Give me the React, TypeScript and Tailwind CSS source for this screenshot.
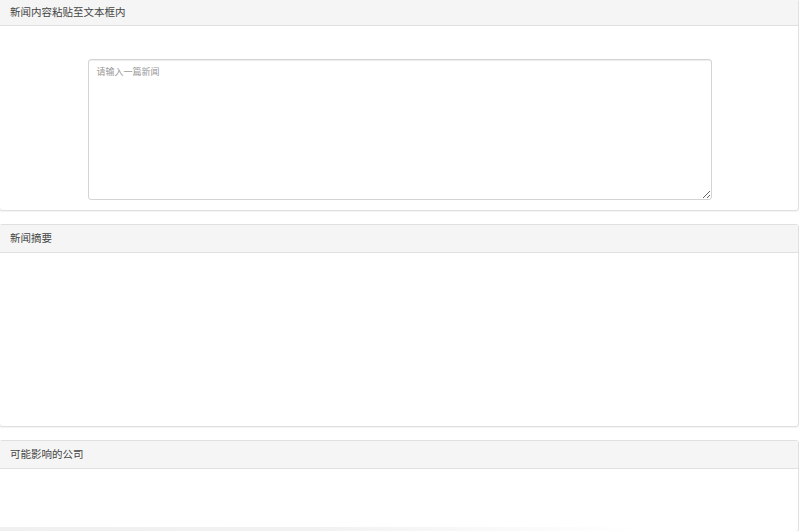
export default function App() {
  const font = { fontFamily: '"Liberation Sans", "Noto Sans CJK SC", sans-serif' };
  return (
    <div className="w-[800px] h-[531px] overflow-hidden bg-white" style={font}>
      <div className="-mt-px pr-[1px]">
        {/* 新闻内容 */}
        <section className="border border-[#e0e0e0] rounded-[3px] bg-white shadow-[0_1px_1px_rgba(0,0,0,0.05)] -ml-px">
          <div className="h-[26px] bg-[#f5f5f5] border-b border-[#e0e0e0] pl-[10px] flex items-center text-[10.5px] text-[#444]">
            新闻内容粘贴至文本框内
          </div>
          <div className="pt-[33px] pb-[10px] flex justify-center">
            <textarea
              placeholder="请输入一篇新闻"
              className="w-[624px] h-[141px] ml-[1px] border border-[#d4d4d4] rounded-[3px] px-[8px] py-[6px] text-[9px] text-[#555] placeholder:text-[#999] outline-none resize-y shadow-[inset_0_1px_1px_rgba(0,0,0,0.075)]"
            />
          </div>
        </section>

        {/* 新闻摘要 */}
        <section className="mt-[13px] border border-[#e0e0e0] rounded-[3px] bg-white shadow-[0_1px_1px_rgba(0,0,0,0.05)] -ml-px">
          <div className="h-[28px] bg-[#f5f5f5] border-b border-[#e0e0e0] pl-[10px] flex items-center text-[10.5px] text-[#444]">
            新闻摘要
          </div>
          <div className="h-[173px]" />
        </section>

        {/* 可能影响的公司 */}
        <section className="mt-[13px] border border-[#e0e0e0] rounded-[3px] bg-white shadow-[0_1px_1px_rgba(0,0,0,0.05)] -ml-px">
          <div className="h-[28px] bg-[#f5f5f5] border-b border-[#e0e0e0] pl-[10px] flex items-center text-[10.5px] text-[#444]">
            可能影响的公司
          </div>
          <div className="h-[58px]" />
          <div className="h-[4px] w-[640px] bg-gradient-to-r from-[#f0f0f0] via-[#f2f2f2] to-white" />
        </section>
      </div>
    </div>
  );
}
